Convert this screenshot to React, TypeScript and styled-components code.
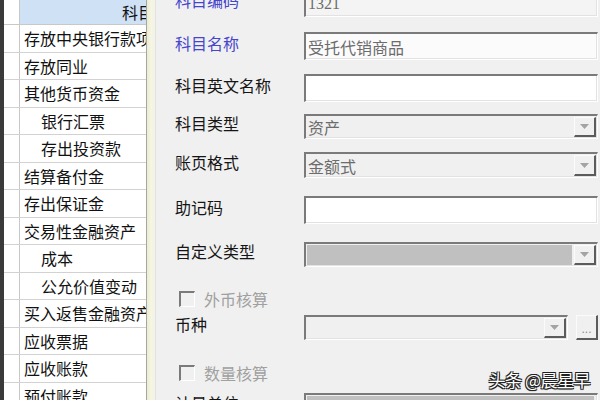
import React from "react";
import styled, { createGlobalStyle } from "styled-components";

const Global = createGlobalStyle`
  html, body { margin: 0; padding: 0; background: #f0f0f0; }
  body { width: 600px; height: 400px; overflow: hidden;
    font-family: "Noto Sans CJK SC", "Noto Sans", sans-serif; }
`;

const Screen = styled.div`
  display: flex;
  width: 600px;
  height: 400px;
  overflow: hidden;
  position: relative;
`;

const LeftEdge = styled.div`
  width: 4px;
  flex: none;
  background: #3a3a3a;
`;

const Grid = styled.div`
  width: 142px;
  flex: none;
  background: #fff;
  border-right: 1px solid #a6a6a6;
  overflow: hidden;
  display: flex;
  flex-direction: column;
`;

const GridHeader = styled.div`
  display: flex;
  height: 24px;
  flex: none;
  border-bottom: 1px solid #c8c8c8;
`;

const Gutter = styled.div`
  width: 15px;
  flex: none;
  background: #fff;
  border-right: 1px solid #c8c8c8;
`;

const HeaderCell = styled.div`
  flex: none;
  width: 268px;
  background: #cfe1f5;
  font-size: 16px;
  line-height: 24px;
  text-align: center;
  color: #111;
`;

const GridRow = styled.div`
  display: flex;
  height: 26.5px;
  flex: none;
  border-bottom: 1px solid #d2d2d2;
`;

const Cell = styled.div<{ $indent: number }>`
  flex: none;
  white-space: nowrap;
  font-size: 16px;
  line-height: 26.5px;
  color: #111;
  padding-left: ${(p) => p.$indent}px;
`;

const Splitter = styled.div`
  width: 8px;
  flex: none;
  background: linear-gradient(to right, #e9ecd2, #f6f6e2 50%, #f2f2ea);
  border-right: 1px solid #e4e4dc;
`;

const Dialog = styled.div`
  flex: 1;
  background: #f0f0f0;
  padding: 0 2px 0 19px;
  overflow: hidden;
`;

const Form = styled.div`
  display: flex;
  flex-direction: column;
  margin-top: -11px;
`;

const Row = styled.div<{ $mt: number }>`
  display: flex;
  align-items: center;
  margin-top: ${(p) => p.$mt}px;
`;

const Label = styled.div<{ $tone?: "blue" | "gray" }>`
  width: 129px;
  flex: none;
  font-size: 16px;
  line-height: 20px;
  padding-bottom: 6px;
  white-space: nowrap;
  color: ${(p) => (p.$tone === "blue" ? "#4646cc" : p.$tone === "gray" ? "#9a9a9a" : "#151515")};
`;

const Sunken = styled.div<{ $h: number; $bg: string }>`
  flex: 1;
  min-width: 0;
  height: ${(p) => p.$h}px;
  box-sizing: border-box;
  background: ${(p) => p.$bg};
  border-top: 2px solid #7a7a7a;
  border-left: 2px solid #7a7a7a;
  border-bottom: 1px solid #ffffff;
  border-right: 1px solid #ffffff;
  box-shadow: inset 0 -1px 0 #e2e2e2, inset -1px 0 0 #e2e2e2;
  display: flex;
  align-items: center;
  padding: 0 1px 0 1px;
  font-size: 16px;
  color: #6c6c6c;
  white-space: nowrap;
  overflow: hidden;
`;

const FieldText = styled.span`
  flex: 1;
  padding-left: 1px;
  font-family: "Liberation Serif", "Noto Sans CJK SC", serif;
`;

const Fill = styled.div`
  flex: 1;
  align-self: stretch;
  margin: 1px 2px 1px 0;
  background: #c0c0c0;
`;

const DropButton = styled.div`
  width: 22px;
  flex: none;
  align-self: stretch;
  margin: 1px 0;
  box-sizing: border-box;
  background: #f0f0f0;
  border-top: 1px solid #fbfbfb;
  border-left: 1px solid #fbfbfb;
  border-bottom: 2px solid #5c5c5c;
  border-right: 2px solid #5c5c5c;
  display: flex;
  align-items: center;
  justify-content: center;
`;

const DotsButton = styled.div`
  width: 22px;
  height: 25px;
  flex: none;
  margin-left: 8px;
  box-sizing: border-box;
  background: #f0f0f0;
  border-top: 1px solid #fbfbfb;
  border-left: 1px solid #fbfbfb;
  border-bottom: 2px solid #5c5c5c;
  border-right: 2px solid #5c5c5c;
  display: flex;
  align-items: flex-end;
  justify-content: center;
  font-family: "Liberation Sans", sans-serif;
  font-size: 12px;
  line-height: 14px;
  color: #8a8a8a;
  padding-bottom: 2px;
`;

const CheckRow = styled.div<{ $mt: number }>`
  display: flex;
  align-items: center;
  height: 20px;
  margin-top: ${(p) => p.$mt}px;
  padding-left: 4px;
  gap: 9px;
`;

const CheckBox = styled.div`
  width: 16px;
  height: 16px;
  box-sizing: border-box;
  background: #f0f0f0;
  border-top: 2px solid #7a7a7a;
  border-left: 2px solid #7a7a7a;
  border-bottom: 1px solid #fff;
  border-right: 1px solid #fff;
`;

const CheckText = styled.span`
  font-size: 16px;
  color: #a0a0a0;
  line-height: 20px;
`;

const Watermark = styled.div`
  position: absolute;
  right: 10px;
  bottom: 8px;
  font-size: 17px;
  color: #fff;
  letter-spacing: -0.5px;
  text-shadow: 1px 1px 0 #222, -1px -1px 0 #222, 1px -1px 0 #222, -1px 1px 0 #222, 0 1px 1px #000;
`;

const Arrow = () => (
  <svg width="9" height="5" viewBox="0 0 9 5">
    <path d="M0 0 H9 L4.5 5 Z" fill="#a3a3a3" />
  </svg>
);

const rows: [string, number][] = [
  ["存放中央银行款项", 4],
  ["存放同业", 4],
  ["其他货币资金", 4],
  ["银行汇票", 21],
  ["存出投资款", 21],
  ["结算备付金", 4],
  ["存出保证金", 4],
  ["交易性金融资产", 4],
  ["成本", 21],
  ["公允价值变动", 21],
  ["买入返售金融资产", 4],
  ["应收票据", 4],
  ["应收账款", 4],
  ["预付账款", 4],
];

export default function App() {
  return (
    <>
      <Global />
      <Screen>
        <LeftEdge />
        <Grid>
          <GridHeader>
            <Gutter />
            <HeaderCell>科目名称</HeaderCell>
          </GridHeader>
          {rows.map(([t, ind]) => (
            <GridRow key={t}>
              <Gutter />
              <Cell $indent={ind}>{t}</Cell>
            </GridRow>
          ))}
        </Grid>
        <Splitter />
        <Dialog>
          <Form>
            <Row $mt={0}>
              <Label $tone="blue">科目编码</Label>
              <Sunken $h={28} $bg="#f4f4f4">
                <FieldText>1321</FieldText>
              </Sunken>
            </Row>
            <Row $mt={15}>
              <Label $tone="blue">科目名称</Label>
              <Sunken $h={28} $bg="#fbfbfb">
                <FieldText>受托代销商品</FieldText>
              </Sunken>
            </Row>
            <Row $mt={14}>
              <Label>科目英文名称</Label>
              <Sunken $h={28} $bg="#ffffff" />
            </Row>
            <Row $mt={11}>
              <Label>科目类型</Label>
              <Sunken $h={25} $bg="#f0f0f0">
                <FieldText>资产</FieldText>
                <DropButton>
                  <Arrow />
                </DropButton>
              </Sunken>
            </Row>
            <Row $mt={13}>
              <Label>账页格式</Label>
              <Sunken $h={26} $bg="#f0f0f0">
                <FieldText>金额式</FieldText>
                <DropButton>
                  <Arrow />
                </DropButton>
              </Sunken>
            </Row>
            <Row $mt={18}>
              <Label>助记码</Label>
              <Sunken $h={28} $bg="#ffffff" />
            </Row>
            <Row $mt={17}>
              <Label>自定义类型</Label>
              <Sunken $h={25} $bg="#f0f0f0">
                <Fill />
                <DropButton>
                  <Arrow />
                </DropButton>
              </Sunken>
            </Row>
            <CheckRow $mt={22}>
              <CheckBox />
              <CheckText>外币核算</CheckText>
            </CheckRow>
            <Row $mt={5}>
              <Label>币种</Label>
              <Sunken $h={25} $bg="#f0f0f0">
                <FieldText />
                <DropButton>
                  <Arrow />
                </DropButton>
              </Sunken>
              <DotsButton>...</DotsButton>
            </Row>
            <CheckRow $mt={23}>
              <CheckBox />
              <CheckText>数量核算</CheckText>
            </CheckRow>
            <Row $mt={10}>
              <Label>计量单位</Label>
              <Sunken $h={26} $bg="#f0f0f0">
                <Fill />
              </Sunken>
            </Row>
          </Form>
        </Dialog>
        <Watermark>头条 @晨星早</Watermark>
      </Screen>
    </>
  );
}
